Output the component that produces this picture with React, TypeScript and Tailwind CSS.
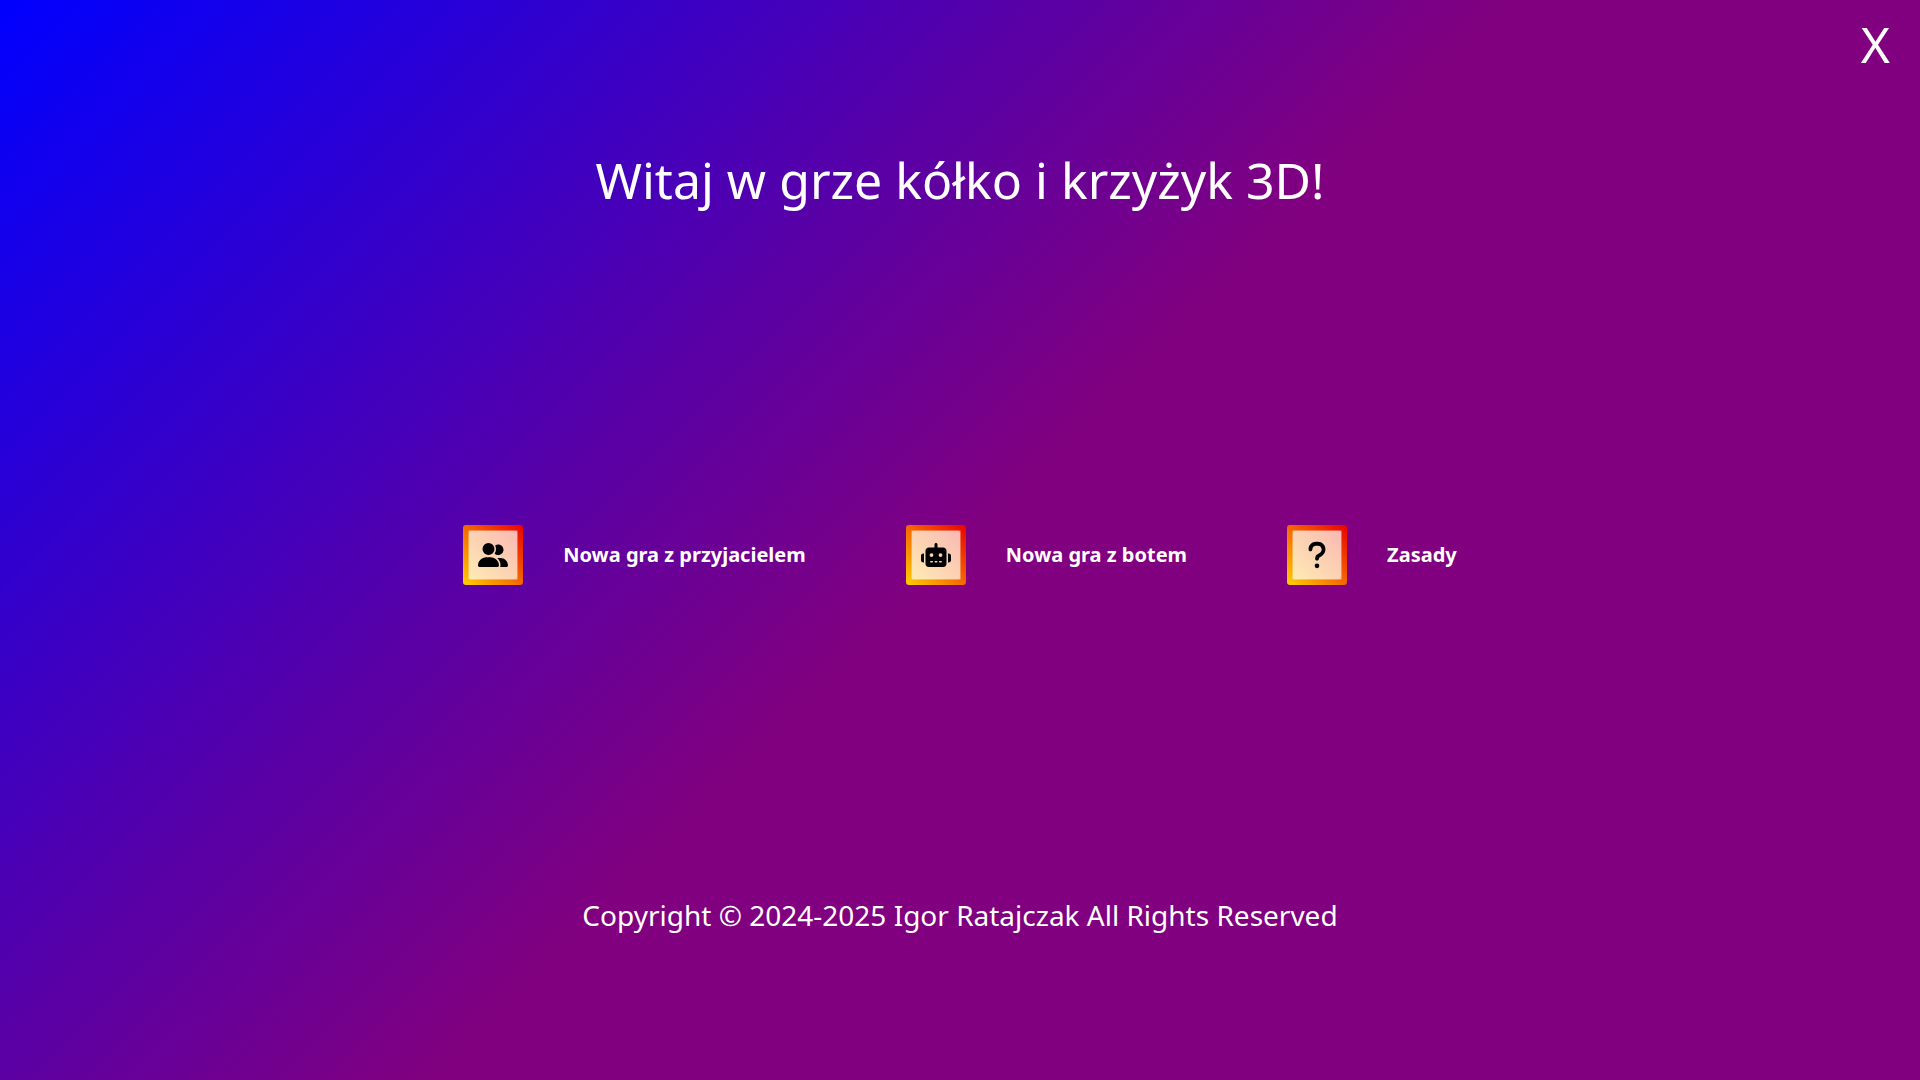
import { FaQuestion, FaRobot, FaUserGroup } from "react-icons/fa6";
import type { IconType } from "react-icons";

const actions: { id: string; label: string; icon: IconType }[] = [
  { id: "friend", label: "Nowa gra z przyjacielem", icon: FaUserGroup },
  { id: "bot", label: "Nowa gra z botem", icon: FaRobot },
  { id: "rules", label: "Zasady", icon: FaQuestion },
];

export default function App() {
  return (
    <div className="flex min-h-screen flex-col bg-[linear-gradient(135deg,#0000ff,#800080_50%)] font-['Noto_Sans',sans-serif] text-white">
      <header className="flex h-[88px] items-center justify-end px-[30px]">
        <button type="button" aria-label="Zamknij" className="text-[50px] leading-none">
          X
        </button>
      </header>
      <main className="flex grow flex-col">
        <h1 className="mt-[58px] text-center text-[50px] leading-[68px]">Witaj w grze kółko i krzyżyk 3D!</h1>
        <div className="flex grow items-center justify-center gap-[100px] pt-px">
          {actions.map(({ id, label, icon: Icon }) => (
            <div key={id} className="flex items-center gap-10">
              <button
                id={id}
                type="button"
                className="size-[60px] rounded-[3px] bg-[linear-gradient(45deg,#ffd000,#ea0000)] p-[5px] text-black"
              >
                <span className="flex size-full items-center justify-center rounded-[2px] border border-white/30 bg-white/70 bg-clip-padding">
                  <Icon className="size-[30px]" />
                </span>
              </button>
              <label htmlFor={id} className="text-xl font-bold">
                {label}
              </label>
            </div>
          ))}
        </div>
      </main>
      <footer className="mb-[145px] text-center text-[28px] leading-[40px]">
        Copyright © 2024-2025 Igor Ratajczak All Rights Reserved
      </footer>
    </div>
  );
}
